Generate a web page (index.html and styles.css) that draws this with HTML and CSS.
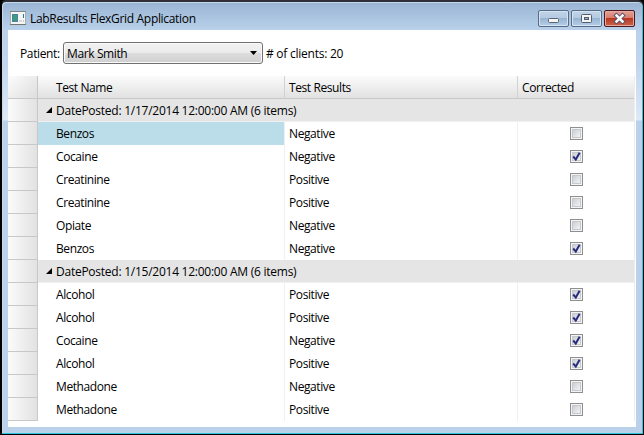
FILE: index.html
```
<!DOCTYPE html>
<html lang="en">
<head>
<meta charset="utf-8">
<title>LabResults FlexGrid Application</title>
<link rel="stylesheet" href="styles.css">
</head>
<body>
<div class="window">
  <header class="titlebar">
    <svg class="appicon" width="16" height="14" viewBox="0 0 16 14"><rect x=".5" y=".5" width="15" height="13" fill="#f5f5f2" stroke="#a5adb5"/><path d="M0 .5H16" stroke="#7c8790"/><path d="M0 13.5H16" stroke="#77736f"/><rect x="2" y="3" width="6" height="8" fill="#4b82a0"/><rect x="3" y="4" width="4" height="6" fill="#409a80"/><rect x="9" y="9" width="3" height="2" fill="#d5d7d8"/><rect x="13" y="3" width="1" height="4" fill="#2878b0"/><rect x="13" y="9" width="1" height="2" fill="#c5c8ca"/></svg>
    <h1 class="title">LabResults FlexGrid Application</h1>
    <div class="controls">
      <span class="ctl"><svg width="29" height="16" viewBox="0 0 29 16"><rect x="9.5" y="8.5" width="10" height="4" rx="1" fill="#f4f4f2" stroke="#5b6475"/></svg></span>
      <span class="ctl"><svg width="29" height="16" viewBox="0 0 29 16"><rect x="9.5" y="4.5" width="10" height="8" rx="1" fill="#f4f4f2" stroke="#535c70"/><rect x="12.500" y="7.500" width="4" height="2" fill="#8fb0d0" stroke="#535c70"/></svg></span>
      <span class="ctl close"><svg width="29" height="16" viewBox="0 0 29 16"><path d="M11.500 5.500L17.500 11.500M17.500 5.500L11.500 11.500" stroke="#55506a" stroke-width="4.400" stroke-linecap="square"/><path d="M11.500 5.500L17.500 11.500M17.500 5.500L11.500 11.500" stroke="#fafafa" stroke-width="2.500" stroke-linecap="square"/></svg></span>
    </div>
  </header>
  <main class="client">
    <div class="toolbar">
      <span class="label">Patient:</span>
      <div class="combo"><span class="value">Mark Smith</span><svg width="7" height="4" viewBox="0 0 7 4"><path d="M0 0H7L3.500 4Z" fill="#000"/></svg></div>
      <span class="clients"># of clients: 20</span>
    </div>
    <div class="grid" id="grid">
      <div class="row head"><i class="rh"></i><div class="cell name">Test Name</div><div class="cell result">Test Results</div><div class="cell corr">Corrected</div></div>
    </div>
  </main>
</div>
<script src="grid.js"></script>
</body>
</html>
```
FILE: styles.css
```
* { box-sizing: border-box; }
body { margin: 0; background: #000; font: 12px/16px "Open Sans", "Noto Sans", sans-serif; color: #000; overflow: hidden; }
.window {
  width: 644px; height: 435px; padding: 0 6px 6px;
  border: 1px solid #000; border-left-width: 2px; border-top: 2px solid #302e36;
  border-radius: 6px 6px 0 0;
  background: linear-gradient(#99b4d3 0, #b9d1ea 28px, #c2d7ee 65px, #dce9f7 118px, #b9d1ea 119px);
  box-shadow: inset -1px -1px #2ac4dc, inset 1px 1px #c4d8ec;
}
.titlebar { display: flex; height: 28px; padding: 0 2px 0 2px; }
.appicon { margin-top: 9px; }
.title { margin: 9px 0 0 4px; font-size: 12px; line-height: 16px; font-weight: 400; letter-spacing: -.32px; white-space: nowrap; }
.controls { display: flex; gap: 2px; margin: 8px 0 0 auto; height: 17px; }
.ctl {
  width: 31px; height: 17px; border: 1px solid #596b84; border-radius: 2px;
  background: linear-gradient(#c0d3e8 0, #b4cae2 48%, #98b4d2 50%, #b4cfe8);
  box-shadow: inset 0 0 0 1px #d6e4f2;
}
.ctl svg { display: block; margin-top: -1px; }
.close { border-color: #491821; background: linear-gradient(#e3a197 0, #d57b6c 48%, #b93622 50%, #cc6449); box-shadow: inset 0 0 0 1px #e5a99f; }
.client { width: 628px; height: 397px; background: #fff; }
.toolbar { display: flex; height: 46px; padding: 12px 0 0 12px; letter-spacing: -.38px; }
.label { width: 43px; padding-top: 4px; white-space: nowrap; }
.combo {
  display: flex; align-items: center; justify-content: space-between;
  width: 200px; height: 22px; padding: 1px 5px 0 3px; border: 1px solid #707070; border-radius: 3px;
  background: linear-gradient(#f2f2f2 0, #ebebeb 50%, #dddddd 50%, #cfcfcf);
  box-shadow: inset 0 0 0 1px #fafafa;
}
.combo svg { margin-top: -2px; }
.clients { padding: 4px 0 0 3px; letter-spacing: -.25px; }
.grid { width: 627px; border-right: 1px solid #ececec; }
.row { display: flex; height: 23px; }
.rh { width: 30px; border-right: 1px solid #c8c8c8; border-bottom: 1px solid #c8c8c8; background: linear-gradient(90deg, #fbfbfb, #e2e2e2); }
.cell { padding-top: 4px; border-right: 1px solid #f0f0f0; white-space: nowrap; letter-spacing: -.4px; }
.name { width: 247px; padding-left: 18px; }
.result { width: 233px; padding-left: 4px; }
.corr { width: 116px; padding-left: 4px; border-right: 0; }
.head { background: linear-gradient(#fbfbfb, #e0e0e0); }
.head .cell { border-bottom: 1px solid #c8c8c8; border-right-color: #d2d2d2; }
.head .corr { border-right: 0; }
.head .rh { background: linear-gradient(135deg, #fcfcfc, #dedede); }
.group { display: flex; flex: 1; padding: 4px 0 0 8px; background: #e5e5e5; border-bottom: 1px solid #f0f0f0; letter-spacing: -.25px; white-space: nowrap; }
.group svg { margin: 4px 4px 0 0; }
.selected { background: #badde9; }
.row .check { padding: 5px 0 0 52px; }
.check svg { display: block; }
```
FILE: grid.js
```
const groups = [
  ["1/17/2014", [["Benzos", "Negative", 0], ["Cocaine", "Negative", 1], ["Creatinine", "Positive", 0], ["Creatinine", "Positive", 0], ["Opiate", "Negative", 0], ["Benzos", "Negative", 1]]],
  ["1/15/2014", [["Alcohol", "Positive", 1], ["Alcohol", "Positive", 1], ["Cocaine", "Negative", 1], ["Alcohol", "Positive", 1], ["Methadone", "Negative", 0], ["Methadone", "Positive", 0]]]
];
const box = on => `<svg width="13" height="13" viewBox="0 0 13 13"><defs><linearGradient id="box" x1="0" y1="0" x2="1" y2="1"><stop offset="0" stop-color="#c8ccd4"/><stop offset="1" stop-color="#f6f6f6"/></linearGradient></defs><rect x=".5" y=".5" width="12" height="12" fill="#f4f4f4" stroke="#8e8f8f"/><rect x="2.5" y="2.5" width="8" height="8" fill="url(#box)" stroke="#c5c8cc"/>${on ? '<path d="M3.200 6.500L5.800 9.600L9.600 2.800" fill="none" stroke="#2a2c7c" stroke-width="2"/>' : ""}</svg>`;
let html = "";
let first = true;
for (const [date, rows] of groups) {
  html += `<div class="row"><i class="rh"></i><div class="group"><svg width="6" height="6" viewBox="0 0 6 6"><path d="M6 0V6H0Z" fill="#000"/></svg>DatePosted: ${date} 12:00:00 AM (6 items)</div></div>`;
  for (const [name, result, on] of rows) {
    html += `<div class="row"><i class="rh"></i><div class="cell name${first ? " selected" : ""}">${name}</div><div class="cell result">${result}</div><div class="cell corr check">${box(on)}</div></div>`;
    first = false;
  }
}
document.getElementById("grid").insertAdjacentHTML("beforeend", html);
```
